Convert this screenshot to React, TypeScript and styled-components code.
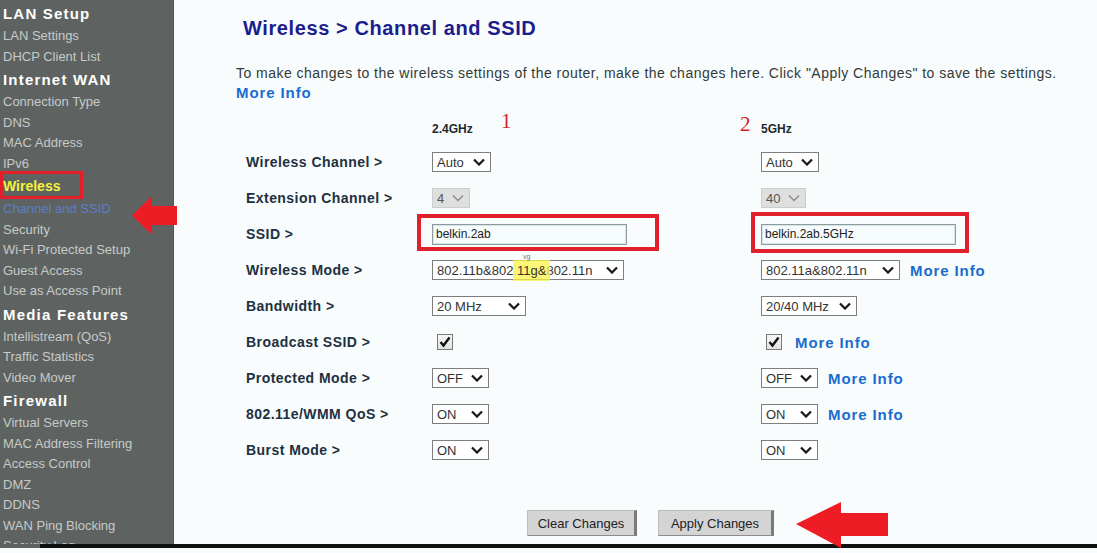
import React from "react";
import styled, { createGlobalStyle } from "styled-components";

type NavKind = "head" | "item" | "group" | "current";

interface NavEntry {
  label: string;
  kind: NavKind;
}

const NAV: NavEntry[] = [
  { label: "LAN Setup", kind: "head" },
  { label: "LAN Settings", kind: "item" },
  { label: "DHCP Client List", kind: "item" },
  { label: "Internet WAN", kind: "head" },
  { label: "Connection Type", kind: "item" },
  { label: "DNS", kind: "item" },
  { label: "MAC Address", kind: "item" },
  { label: "IPv6", kind: "item" },
  { label: "Wireless", kind: "group" },
  { label: "Channel and SSID", kind: "current" },
  { label: "Security", kind: "item" },
  { label: "Wi-Fi Protected Setup", kind: "item" },
  { label: "Guest Access", kind: "item" },
  { label: "Use as Access Point", kind: "item" },
  { label: "Media Features", kind: "head" },
  { label: "Intellistream (QoS)", kind: "item" },
  { label: "Traffic Statistics", kind: "item" },
  { label: "Video Mover", kind: "item" },
  { label: "Firewall", kind: "head" },
  { label: "Virtual Servers", kind: "item" },
  { label: "MAC Address Filtering", kind: "item" },
  { label: "Access Control", kind: "item" },
  { label: "DMZ", kind: "item" },
  { label: "DDNS", kind: "item" },
  { label: "WAN Ping Blocking", kind: "item" },
  { label: "Security Log", kind: "item" },
];

const GlobalStyle = createGlobalStyle`
  html, body {
    margin: 0;
    padding: 0;
    background: #f8fcfc;
  }
  body {
    font-family: "Liberation Sans", Arial, sans-serif;
  }
`;

const Page = styled.div`
  position: relative;
  width: 1097px;
  height: 553px;
  display: flex;
  flex-direction: column;
  overflow: hidden;
  background: #f8fcfc;
`;

const Body = styled.div`
  display: flex;
  height: 544px;
`;

const Sidebar = styled.nav`
  flex: 0 0 174px;
  box-sizing: border-box;
  padding-top: 1px;
  background: #5e6361;
  border-right: 1px solid #525755;
  overflow: hidden;
`;

const NavItem = styled.div<{ $kind: NavKind }>`
  position: relative;
  padding-left: 3px;
  white-space: nowrap;
  height: ${(p) => (p.$kind === "head" || p.$kind === "group" ? "25px" : "20.5px")};
  line-height: ${(p) => (p.$kind === "head" || p.$kind === "group" ? "25px" : "20.5px")};
  font-size: ${(p) => (p.$kind === "head" ? "15px" : p.$kind === "group" ? "14px" : "13px")};
  font-weight: ${(p) => (p.$kind === "head" || p.$kind === "group" ? 700 : 400)};
  letter-spacing: ${(p) => (p.$kind === "head" ? "1.2px" : "0")};
  color: ${(p) =>
    p.$kind === "head"
      ? "#ffffff"
      : p.$kind === "group"
      ? "#f4f23a"
      : p.$kind === "current"
      ? "#5b7ec6"
      : "#c6cac8"};

  /* red frame drawn round the open group */
  ${(p) =>
    p.$kind === "group" &&
    `
    &::after {
      content: "";
      position: absolute;
      left: 0;
      top: -3px;
      width: 83px;
      height: 28px;
      box-sizing: border-box;
      border: 3px solid #e3202a;
    }
  `}
`;

const Main = styled.main`
  flex: 1;
  padding-left: 62px;
`;

const Title = styled.h1`
  margin: 16px 0 0 7px;
  font-size: 20px;
  line-height: 24px;
  font-weight: 700;
  letter-spacing: 0.6px;
  color: #1c1c8e;
`;

const Lead = styled.p`
  margin: 24px 0 0;
  font-size: 14px;
  line-height: 19px;
  letter-spacing: 0.47px;
  color: #333a3a;
`;

const InfoLink = styled.a<{ $block?: boolean }>`
  display: ${(p) => (p.$block ? "block" : "inline-block")};
  font-size: 15px;
  font-weight: 700;
  letter-spacing: 0.9px;
  color: #1a6ccf;
  text-decoration: none;
  cursor: pointer;
`;

const Form = styled.div`
  display: grid;
  grid-template-columns: 186px 329px 1fr;
  grid-template-rows: 32px;
  grid-auto-rows: 36px;
  margin: 10px 0 0 10px;
`;

const BandHead = styled.div`
  position: relative;
  display: flex;
  align-items: center;
  padding-top: 2px;
  font-size: 12px;
  font-weight: 700;
  color: #1f2a30;
`;

const Callout = styled.span<{ $left: number; $top: number }>`
  position: absolute;
  left: ${(p) => p.$left}px;
  top: ${(p) => p.$top}px;
  font-family: "Liberation Serif", "Times New Roman", serif;
  font-size: 21px;
  font-weight: 400;
  color: #d42027;
`;

const Label = styled.div`
  display: flex;
  align-items: center;
  font-size: 14px;
  font-weight: 700;
  letter-spacing: 0.45px;
  color: #213041;
`;

const Cell = styled.div`
  position: relative;
  display: flex;
  align-items: center;
  gap: 10px;
`;

const SelectBox = styled.span<{ $w: number; $disabled?: boolean }>`
  display: inline-flex;
  align-items: center;
  justify-content: space-between;
  box-sizing: border-box;
  width: ${(p) => p.$w}px;
  height: 20px;
  padding: 0 5px 0 4px;
  border: 1px solid ${(p) => (p.$disabled ? "#cdcdcd" : "#7e7e7e")};
  background: ${(p) => (p.$disabled ? "#dedfdf" : "#ffffff")};
  color: ${(p) => (p.$disabled ? "#555" : "#333")};
  font-size: 13px;
  white-space: nowrap;
`;

const Highlight = styled.span`
  position: relative;
  padding: 3px 4px;
  margin: 0 -4px;
  background: rgba(250, 244, 70, 0.75);

  &::before {
    content: "vg";
    position: absolute;
    left: 10px;
    top: -7px;
    font-size: 7px;
    color: #777;
  }
`;

const TextField = styled.input`
  box-sizing: border-box;
  width: 195px;
  height: 21px;
  padding: 0 3px;
  border: 1px solid #8f9b9b;
  box-shadow: inset 0 0 0 1px #d3e6e8;
  background: #f6fbfb;
  font-family: "Liberation Sans", Arial, sans-serif;
  font-size: 12px;
  color: #222;
  outline: none;
`;

const Framed = styled.span<{ $l: number; $t: number; $r: number; $b: number }>`
  position: relative;
  display: inline-flex;

  &::after {
    content: "";
    position: absolute;
    left: ${(p) => -p.$l}px;
    top: ${(p) => -p.$t}px;
    right: ${(p) => -p.$r}px;
    bottom: ${(p) => -p.$b}px;
    border: 4px solid #e0202b;
    pointer-events: none;
  }
`;

const Tick = styled.span`
  display: inline-flex;
  box-sizing: border-box;
  width: 16px;
  height: 16px;
  margin: 0 3px 0 5px;
  border: 1px solid #7a7a7a;
  background: linear-gradient(#f6f6f6, #e2e2e2);
`;

const Actions = styled.div`
  display: flex;
  gap: 21px;
  margin: 42px 0 0 291px;
`;

const Button = styled.button<{ $w: number }>`
  box-sizing: border-box;
  width: ${(p) => p.$w}px;
  height: 26px;
  padding: 0;
  border: 1px solid #bdbdbd;
  border-right: 3px solid #7a7a7a;
  border-bottom: 1px solid #8d8d8d;
  background: #d4d4d4;
  font-family: "Liberation Sans", Arial, sans-serif;
  font-size: 13px;
  color: #222;
`;

const BottomRule = styled.div`
  display: flex;
  height: 4px;
  flex: 0 0 4px;
  background: #111;

  &::before {
    content: "";
    width: 40px;
    background: #5e6361;
  }
`;

const Arrow = styled.svg<{ $left: number; $top: number }>`
  position: absolute;
  left: ${(p) => p.$left}px;
  top: ${(p) => p.$top}px;
`;

function Chevron({ muted }: { muted?: boolean }) {
  return (
    <svg width="12" height="8" viewBox="0 0 12 8">
      <path
        d="M1 1.5 L6 6.5 L11 1.5"
        fill="none"
        stroke={muted ? "#8c8c8c" : "#1b1b1b"}
        strokeWidth={muted ? 1.4 : 2.3}
      />
    </svg>
  );
}

function Select({
  width,
  disabled,
  children,
}: {
  width: number;
  disabled?: boolean;
  children: React.ReactNode;
}) {
  return (
    <SelectBox $w={width} $disabled={disabled}>
      <span>{children}</span>
      <Chevron muted={disabled} />
    </SelectBox>
  );
}

function Checkbox() {
  return (
    <Tick>
      <svg width="14" height="14" viewBox="0 0 14 14">
        <path d="M2.5 7 L5.5 10.5 L11.5 2.5" fill="none" stroke="#111" strokeWidth="2.4" />
      </svg>
    </Tick>
  );
}

function MoreInfo() {
  return <InfoLink>More Info</InfoLink>;
}

export default function App() {
  return (
    <>
      <GlobalStyle />
      <Page>
        <Body>
          <Sidebar>
            {NAV.map((entry) => (
              <NavItem key={entry.label} $kind={entry.kind}>
                {entry.label}
              </NavItem>
            ))}
          </Sidebar>

          <Main>
            <Title>Wireless &gt; Channel and SSID</Title>
            <Lead>
              To make changes to the wireless settings of the router, make the changes here. Click
              "Apply Changes" to save the settings.
              <InfoLink $block>More Info</InfoLink>
            </Lead>

            <Form>
              <div />
              <BandHead>
                2.4GHz
                <Callout $left={69} $top={-3}>1</Callout>
              </BandHead>
              <BandHead>
                <Callout $left={-21} $top={0}>2</Callout>
                5GHz
              </BandHead>

              <Label>Wireless Channel &gt;</Label>
              <Cell>
                <Select width={59}>Auto</Select>
              </Cell>
              <Cell>
                <Select width={58}>Auto</Select>
              </Cell>

              <Label>Extension Channel &gt;</Label>
              <Cell>
                <Select width={38} disabled>4</Select>
              </Cell>
              <Cell>
                <Select width={45} disabled>40</Select>
              </Cell>

              <Label>SSID &gt;</Label>
              <Cell>
                <Framed $l={15} $t={10} $r={32} $b={6}>
                  <TextField defaultValue="belkin.2ab" />
                </Framed>
              </Cell>
              <Cell>
                <Framed $l={10} $t={12} $r={13} $b={8}>
                  <TextField defaultValue="belkin.2ab.5GHz" />
                </Framed>
              </Cell>

              <Label>Wireless Mode &gt;</Label>
              <Cell>
                <Select width={192}>
                  802.11b&amp;802.<Highlight>11g&amp;</Highlight>802.11n
                </Select>
              </Cell>
              <Cell>
                <Select width={139}>802.11a&amp;802.11n</Select>
                <MoreInfo />
              </Cell>

              <Label>Bandwidth &gt;</Label>
              <Cell>
                <Select width={94}>20 MHz</Select>
              </Cell>
              <Cell>
                <Select width={96}>20/40 MHz</Select>
              </Cell>

              <Label>Broadcast SSID &gt;</Label>
              <Cell>
                <Checkbox />
              </Cell>
              <Cell>
                <Checkbox />
                <MoreInfo />
              </Cell>

              <Label>Protected Mode &gt;</Label>
              <Cell>
                <Select width={57}>OFF</Select>
              </Cell>
              <Cell>
                <Select width={57}>OFF</Select>
                <MoreInfo />
              </Cell>

              <Label>802.11e/WMM QoS &gt;</Label>
              <Cell>
                <Select width={57}>ON</Select>
              </Cell>
              <Cell>
                <Select width={57}>ON</Select>
                <MoreInfo />
              </Cell>

              <Label>Burst Mode &gt;</Label>
              <Cell>
                <Select width={57}>ON</Select>
              </Cell>
              <Cell>
                <Select width={57}>ON</Select>
              </Cell>
            </Form>

            <Actions>
              <Button $w={110}>Clear Changes</Button>
              <Button $w={116}>Apply Changes</Button>
            </Actions>
          </Main>
        </Body>
        <BottomRule />

        {/* pointer at the open menu entry */}
        <Arrow $left={132} $top={195} width="45" height="41" viewBox="0 0 45 41">
          <path d="M0 20.5 L20 1 L20 11 L45 11 L45 30 L20 30 L20 40 Z" fill="#ee1d25" />
        </Arrow>

        {/* pointer at the apply button */}
        <Arrow $left={796} $top={501} width="92" height="48" viewBox="0 0 92 48">
          <path d="M0 23 L45 1 L45 12 L92 12 L92 35 L45 35 L45 47 Z" fill="#ee1d25" />
        </Arrow>
      </Page>
    </>
  );
}
